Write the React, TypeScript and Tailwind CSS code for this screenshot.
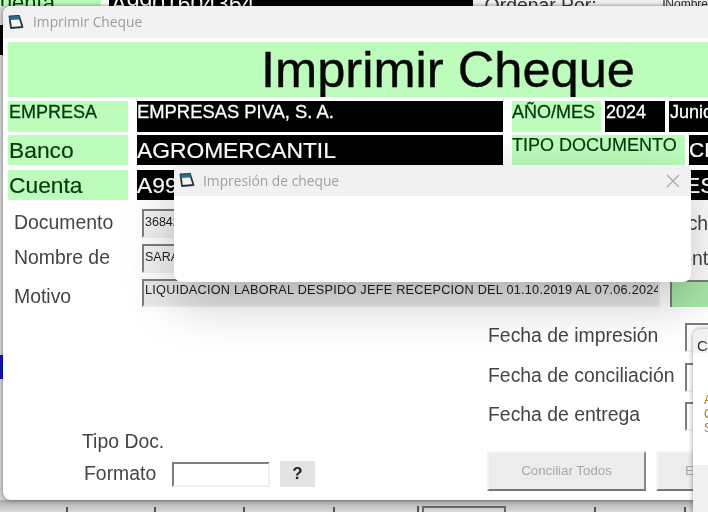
import type { ReactNode } from "react";

const sans = "font-['Liberation_Sans',Arial,sans-serif]";
const ui = "font-['Open_Sans','Noto_Sans',sans-serif]";

function WinIcon() {
  return (
    <svg width="16" height="15" viewBox="0 0 16 15" fill="none" className="shrink-0">
      <path d="M1.5 1.5 L11 1 L14.5 12 L3 13 Z" fill="#f4f6f6" stroke="#1f3742" strokeWidth="1.8" strokeLinejoin="round" />
      <path d="M1.5 1.5 L11 1 L12 4.5 L2 5 Z" fill="#2f6f8a" />
    </svg>
  );
}

function Green({ className, children }: { className: string; children: ReactNode }) {
  return <div className={`bg-[#bcfdbc] text-[#053a0b] shrink-0 overflow-hidden whitespace-nowrap ${className}`}>{children}</div>;
}

function Black({ className, children }: { className: string; children: ReactNode }) {
  return <div className={`bg-black text-white shrink-0 overflow-hidden whitespace-nowrap ${className}`}>{children}</div>;
}

function Sunken({ className, children }: { className: string; children?: ReactNode }) {
  return (
    <div className={`border-2 border-t-[#7d7d7d] border-l-[#7d7d7d] border-r-[#efefef] border-b-[#efefef] shrink-0 overflow-hidden whitespace-nowrap text-[#222] ${className}`}>
      {children}
    </div>
  );
}

function FormRow({ label, value, tail }: { label: string; value: string; tail: string }) {
  return (
    <div className="flex items-center h-[29px] text-[19.4px] text-[#444]">
      <div className="w-[134px] pl-[6px] pb-[2px] shrink-0">{label}</div>
      <Sunken className="w-[520px] h-[29px] text-[12.5px] pl-[1px] leading-[22px] bg-[#f2f2f2]">{value}</Sunken>
      <div className="ml-[3px] whitespace-nowrap">{tail}</div>
    </div>
  );
}

function DateRow({ label }: { label: string }) {
  return (
    <div className="flex items-center h-[29px] text-[19.4px] text-[#444]">
      <div className="w-[197px] shrink-0 whitespace-nowrap -mt-[3px]">{label}</div>
      <Sunken className="w-[80px] h-[29px]" />
    </div>
  );
}

export default function App() {
  return (
    <div className={`relative w-[708px] h-[512px] overflow-hidden bg-[#d6d6d6] blur-[0.5px] ${sans}`}>
      {/* window behind */}
      <div className="flex h-[6px] overflow-hidden">
        <div className="w-[102px] bg-[#bcfdbc] text-[22px] leading-[10px] -mt-[2px] text-[#053a0b] whitespace-nowrap">
          <span className="-ml-[16px] inline-block">Cuenta</span>
        </div>
        <div className="w-[8px] bg-white" />
        <div className="w-[366px] bg-black text-white text-[23px] leading-[8px] pl-[2px]">A9901604364</div>
        <div className="w-[192px] bg-[#f0f0f0] pl-[12px] text-[19.4px] leading-[10px] text-[#333]">Ordenar Por:</div>
        <div className="flex-1 bg-[#f0f0f0] border-l-2 border-[#777] text-[12px] leading-[8px] text-[#333]">Nombre</div>
      </div>
      <div className="absolute left-0 top-[25px] w-[3px] h-[30px] bg-black" />
      <div className="absolute left-0 top-[355px] w-[3px] h-[24px] bg-[#1010d0]" />
      <div className="absolute left-0 right-0 bottom-0 h-[12px] flex items-end pl-[66px] bg-gradient-to-b from-[#a9a9a9] to-[#dcdcdc]">
        <div className="w-[88px] h-[5px] border-l-2 border-[#555]" />
        <div className="w-[90px] h-[5px] border-l-2 border-[#555]" />
        <div className="w-[90px] h-[5px] border-l-2 border-[#555]" />
        <div className="w-[84px] h-[5px] border-l-2 border-[#555]" />
        <div className="w-[90px] h-[6px] border-l-2 border-[#555] pl-[3px]">
          <div className="w-[84px] h-[6px] border-2 border-b-0 border-[#666]" />
        </div>
        <div className="w-[88px] h-[5px]" />
        <div className="w-[90px] h-[5px] border-l-2 border-[#555]" />
        <div className="w-[24px] h-[5px] border-l-2 border-[#555]" />
      </div>

      {/* Imprimir Cheque */}
      <div className="absolute left-[3px] top-[6px] w-[740px] h-[494px] bg-white rounded-lg shadow-[0_0_4px_rgba(0,0,0,0.5)] overflow-hidden">
        <div className={`flex items-center gap-[9px] h-[32px] pl-[5px] bg-[#f2f2f2] text-[13.8px] text-[#9c9c9c] ${ui}`}>
          <WinIcon />
          <span>Imprimir Cheque</span>
        </div>
        <div className="pl-[5px] pt-[4px]">
          <Green className="w-[735px] h-[55px] pl-[253px] text-[50.6px] leading-[55px] !text-[#050505] [-webkit-text-stroke:0.4px]">Imprimir Cheque</Green>

          <div className="flex mt-[4px] h-[31px] text-[18px] leading-[22px] [-webkit-text-stroke:0.3px]">
            <Green className="w-[120px] pl-[1px]">EMPRESA</Green>
            <Black className="w-[366px] ml-[9px] text-[18.4px]">EMPRESAS PIVA, S. A.</Black>
            <Green className="w-[89px] ml-[9px]">AÑO/MES</Green>
            <Black className="w-[60px] ml-[4px] pl-[1px]">2024</Black>
            <Black className="w-[70px] ml-[4px] pl-[1px]">Junio</Black>
          </div>
          <div className="flex mt-[3px] h-[30px] [-webkit-text-stroke:0.2px]">
            <Green className="w-[120px] pl-[1px] text-[22.8px] leading-[30px]">Banco</Green>
            <Black className="w-[366px] ml-[9px] text-[22.8px] leading-[30px]">AGROMERCANTIL</Black>
            <Green className="w-[173px] ml-[9px] text-[18px] leading-[20px]">TIPO DOCUMENTO</Green>
            <Black className="w-[40px] ml-[4px] text-[21px] leading-[30px]">CHEQUE</Black>
          </div>
          <div className="flex mt-[5px] h-[30px] text-[22.8px] leading-[30px] [-webkit-text-stroke:0.2px]">
            <Green className="w-[120px] pl-[1px]">Cuenta</Green>
            <Black className="w-[545px] ml-[9px]">A9901604364</Black>
            <Black className="w-[40px] pl-[3px]">ESTADO</Black>
          </div>

          <div className="flex flex-col gap-[6px] mt-[9px]">
            <FormRow label="Documento" value="36842" tail="Fecha" />
            <FormRow label="Nombre de" value="SARA LOPEZ" tail="Monto" />
          </div>
          <div className="flex items-center h-[28px] mt-[6px] text-[19.4px] text-[#444]">
            <div className="w-[134px] pl-[6px] pt-[8px] shrink-0">Motivo</div>
            <Sunken className="w-[518px] h-[28px] text-[12.7px] pl-[1px] leading-[19px] bg-[#e8e8e8] tracking-[0.02em]">LIQUIDACION LABORAL DESPIDO JEFE RECEPCION DEL 01.10.2019 AL 07.06.2024</Sunken>
            <div className="w-[60px] h-[27px] ml-[10px] bg-[#a9e7a9] border-l-2 border-t-2 border-[#7d7d7d] shrink-0" />
          </div>

          <div className="flex mt-[16px]">
            <div className="w-[480px] shrink-0 pl-[74px] pt-[106px] text-[#444] text-[19.4px]">
              <div className="leading-[24px]">Tipo Doc.</div>
              <div className="flex items-center mt-[8px] h-[26px]">
                <div className="w-[90px] pl-[2px]">Formato</div>
                <Sunken className="w-[98px] h-[25px] bg-white" />
                <div className="w-[35px] h-[26px] ml-[10px] bg-[#e3e3e3] text-center text-[17px] font-bold leading-[26px] text-[#222]">?</div>
              </div>
            </div>
            <div>
              <div className="flex flex-col gap-[10.5px]">
                <DateRow label="Fecha de impresión" />
                <DateRow label="Fecha de conciliación" />
                <DateRow label="Fecha de entrega" />
              </div>
              <div className="flex gap-[10px] mt-[20px] -ml-[1px]">
                <div className="w-[159px] h-[40px] bg-[#ececec] border-2 border-t-[#f4f4f4] border-l-[#f4f4f4] border-r-[#888] border-b-[#777] text-center text-[13.3px] leading-[36px] text-[#a8a8a8] shrink-0">Conciliar Todos</div>
                <div className="w-[100px] h-[40px] bg-[#ececec] border-2 border-t-[#f4f4f4] border-l-[#f4f4f4] border-b-[#777] pl-[27px] text-[13.3px] leading-[36px] text-[#a8a8a8] shrink-0">Entregar</div>
              </div>
            </div>
          </div>
        </div>
      </div>

      {/* small window at the right */}
      <div className="absolute left-[693px] top-[329px] w-[60px] h-[190px] flex flex-col bg-white rounded-lg shadow-[0_0_5px_rgba(0,0,0,0.4)] overflow-hidden">
        <div className="h-[24px] pl-[4px] bg-[#f2f2f2] text-[15px] leading-[33px] text-[#333]">Confirmar</div>
        <div className="h-[112px] pl-[11px] pt-[40px] text-[12px] leading-[14px] text-[#a87c10]">
          <div>Aviso</div>
          <div>Cheque</div>
          <div>Se ha</div>
        </div>
        <div className="flex-1 bg-[#f0f0f0]" />
      </div>

      {/* Impresion de cheque */}
      <div className="absolute left-[174px] top-[165px] w-[517px] h-[117px] bg-white rounded-lg shadow-[0_18px_50px_rgba(0,0,0,0.25)] overflow-hidden">
        <div className={`flex items-center h-[31px] pl-[5px] pr-[11px] gap-[8px] bg-[#f1f1f1] text-[13.8px] text-[#a0a0a0] ${ui}`}>
          <WinIcon />
          <span className="flex-1 pt-[2px]">Impresión de cheque</span>
          <svg width="14" height="14" viewBox="0 0 14 14" stroke="#a9a9a9" strokeWidth="1.2" fill="none">
            <path d="M1 1 L13 13 M13 1 L1 13" />
          </svg>
        </div>
      </div>
    </div>
  );
}
